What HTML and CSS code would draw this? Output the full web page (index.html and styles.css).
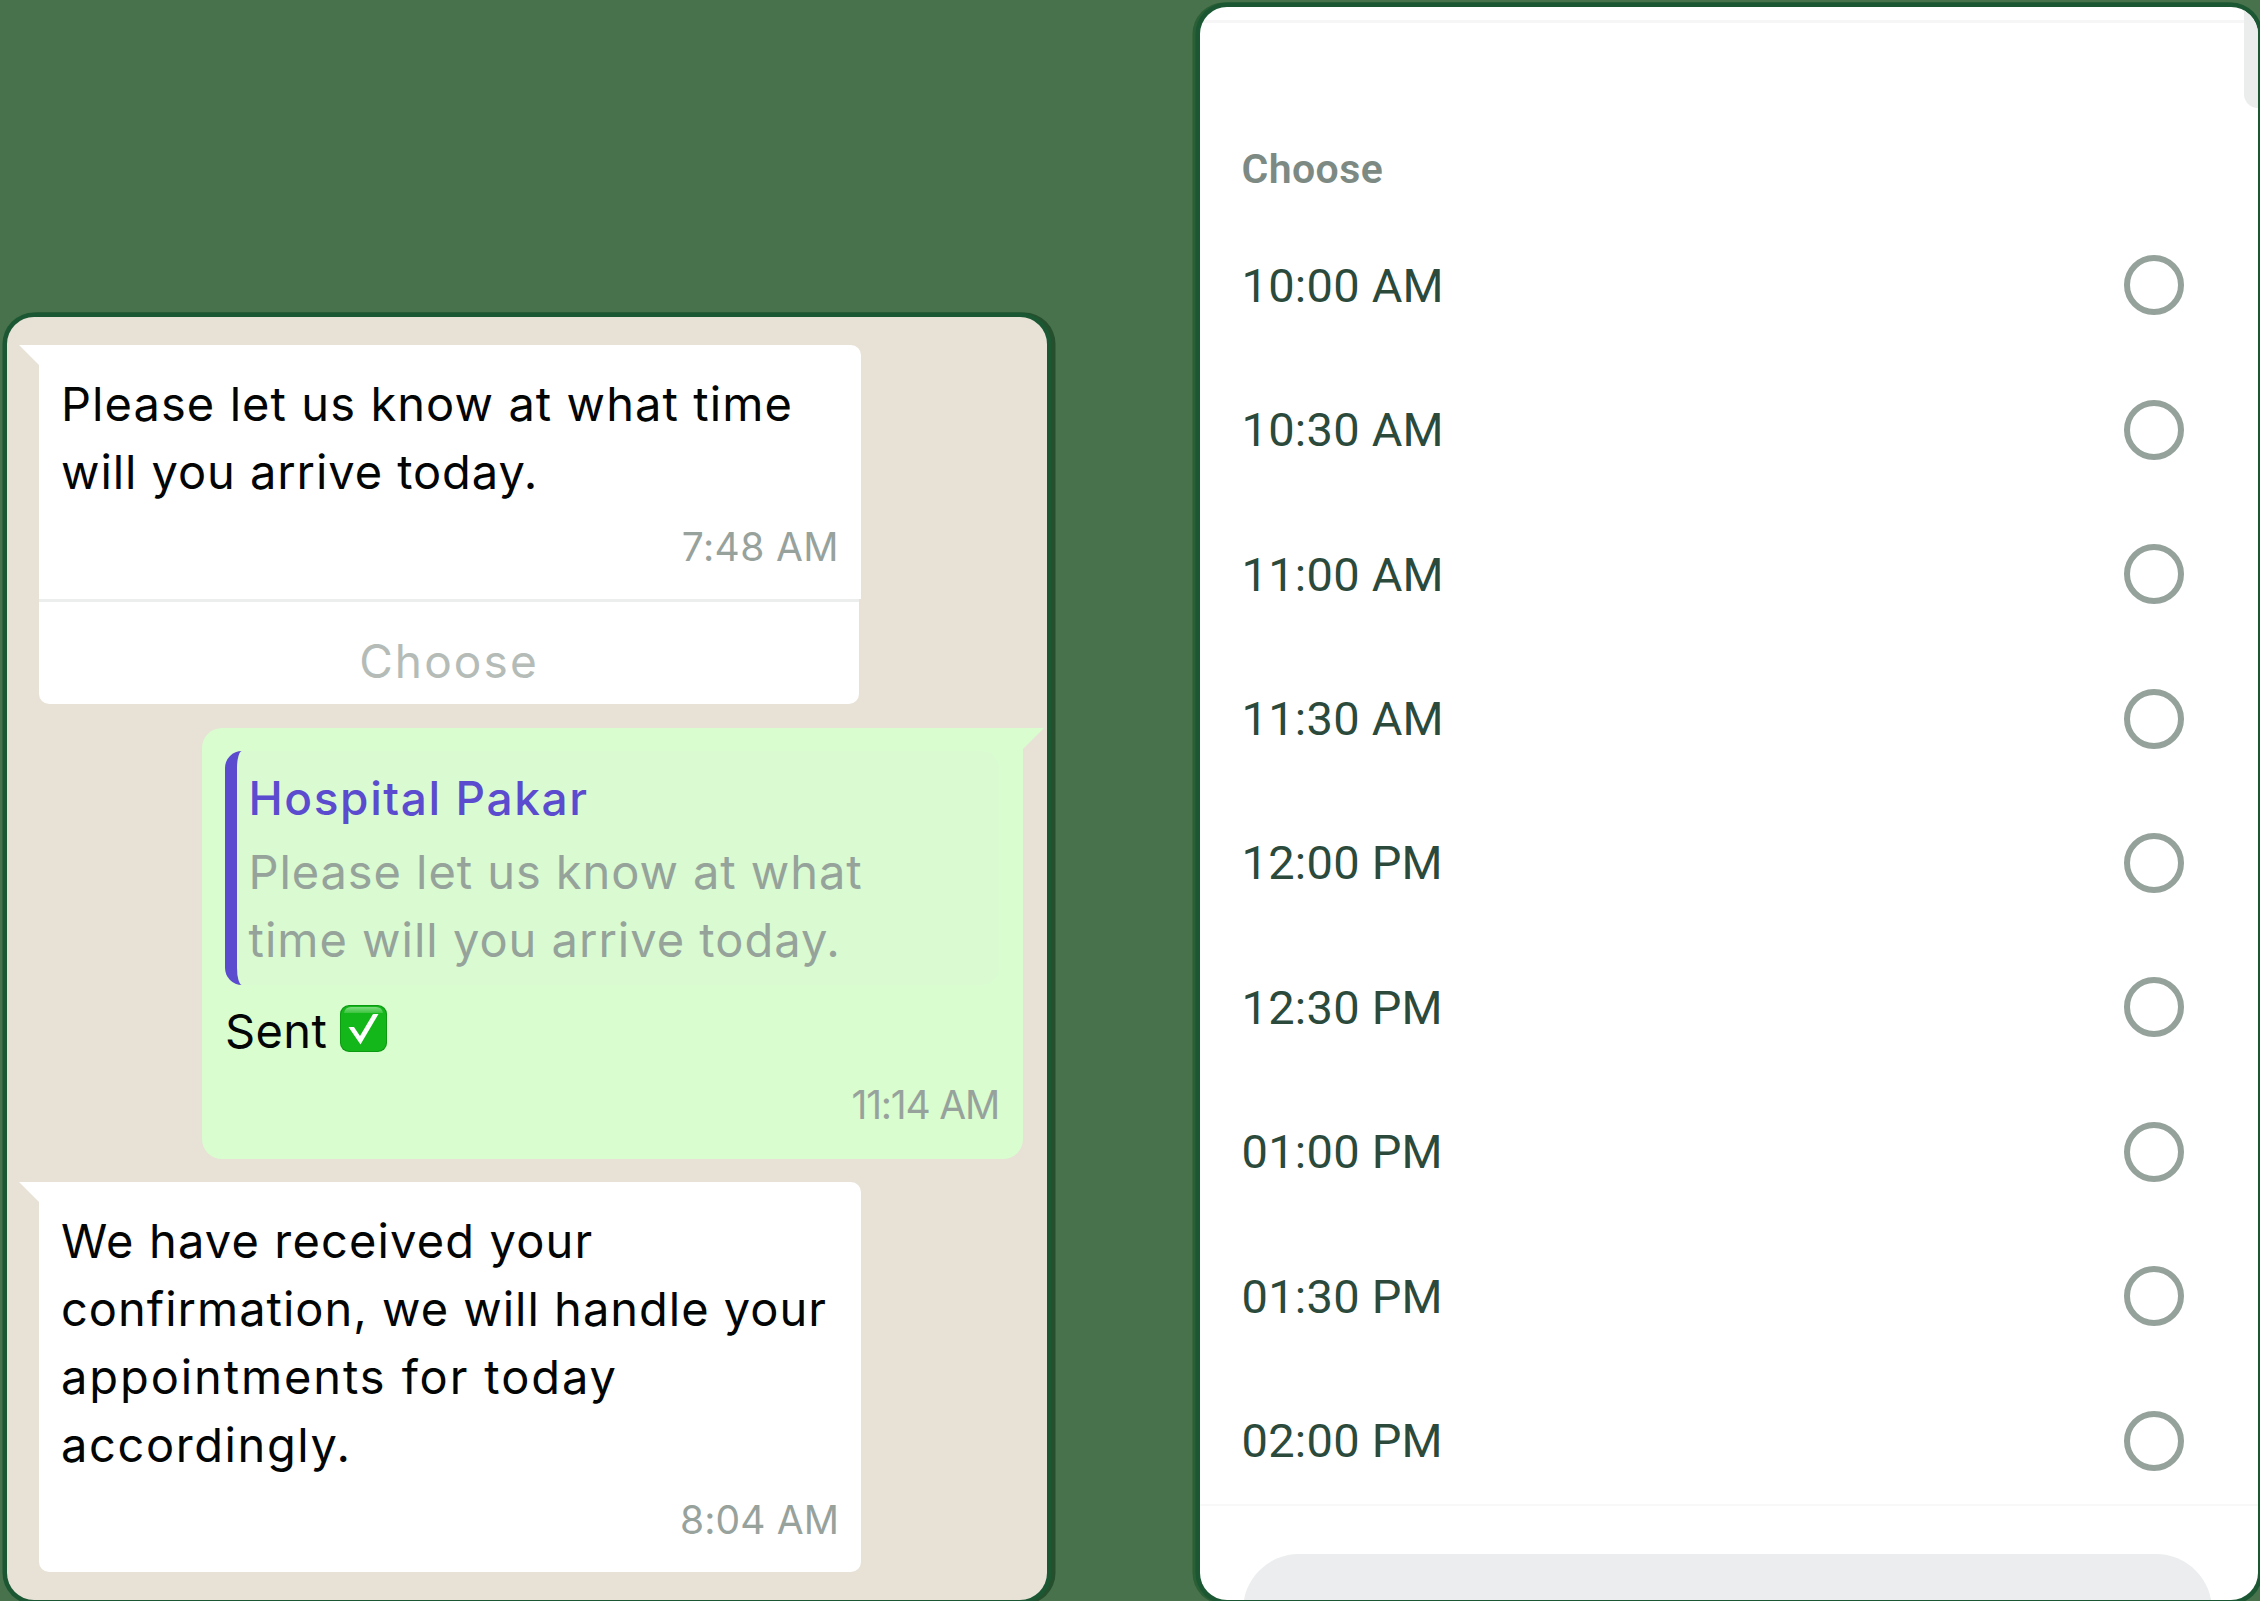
FILE: index.html
```
<!DOCTYPE html>
<html lang="en">
<head>
<meta charset="utf-8">
<title>Appointment time</title>
<link rel="stylesheet" href="styles.css">
</head>
<body>
<main class="stage">
  <section class="chat">
    <article class="bubble incoming has-action">
      <svg class="tail tail-left" viewBox="0 0 21 21"><path d="M0 0H21V21Z"/></svg>
      <div class="body">
        <p class="message">
          <span class="line t-110">Please let us know at what time</span>
          <span class="line t-95">will you arrive today.</span>
        </p>
        <time class="time t-40">7:48 AM</time>
      </div>
      <button class="action" type="button">Choose</button>
    </article>

    <article class="bubble outgoing">
      <svg class="tail tail-right" viewBox="0 0 21 21"><path d="M21 0H0V21Z"/></svg>
      <blockquote class="quote">
        <h2 class="quote-name">Hospital Pakar</h2>
        <p class="quote-text">
          <span class="line t-95">Please let us know at what</span>
          <span class="line t-100">time will you arrive today.</span>
        </p>
      </blockquote>
      <p class="message sent">
        <span class="t-40">Sent</span>
        <svg class="check" viewBox="0 0 47 47">
          <defs>
            <linearGradient id="gloss" x1="0" y1="0" x2="0" y2="1">
              <stop offset="0" stop-color="#7fdc80"/>
              <stop offset="1" stop-color="#3cc43f"/>
            </linearGradient>
          </defs>
          <rect width="47" height="47" rx="9" fill="#0b9a12"/>
          <rect x="1" y="1" width="45" height="45" rx="8.500" fill="#13b719"/>
          <path d="M4 8Q5 2 11 2H36Q42 2 43 8Z" fill="url(#gloss)"/>
          <path d="M8.500 22H14L20 31L33 9H38.500L20.500 39.500Z" fill="#fff"/>
        </svg>
      </p>
      <time class="time t-neg">11:14 AM</time>
    </article>

    <article class="bubble incoming">
      <svg class="tail tail-left" viewBox="0 0 21 21"><path d="M0 0H21V21Z"/></svg>
      <div class="body last">
        <p class="message">
          <span class="line t-115">We have received your</span>
          <span class="line t-100">confirmation, we will handle your</span>
          <span class="line t-190">appointments for today</span>
          <span class="line t-160">accordingly.</span>
        </p>
        <time class="time t-10">8:04 AM</time>
      </div>
    </article>
  </section>

  <section class="picker">
    <div class="scroll-thumb"></div>
    <h1 class="picker-title">Choose</h1>
    <ul class="options">
      <li class="option">10:00 AM<span class="radio"></span></li>
      <li class="option">10:30 AM<span class="radio"></span></li>
      <li class="option">11:00 AM<span class="radio"></span></li>
      <li class="option">11:30 AM<span class="radio"></span></li>
      <li class="option">12:00 PM<span class="radio"></span></li>
      <li class="option">12:30 PM<span class="radio"></span></li>
      <li class="option">01:00 PM<span class="radio"></span></li>
      <li class="option">01:30 PM<span class="radio"></span></li>
      <li class="option">02:00 PM<span class="radio"></span></li>
    </ul>
    <footer class="picker-footer">
      <button class="send" type="button">Send</button>
    </footer>
  </section>
</main>
</body>
</html>
```
FILE: styles.css
```
* {
  box-sizing: border-box;
  margin: 0;
  padding: 0;
}

body {
  width: 2260px;
  height: 1601px;
  overflow: hidden;
  background: #48724b;
}

.stage {
  display: flex;
  justify-content: space-between;
  align-items: flex-end;
  height: 1601px;
  padding: 0 2px 1.500px 6.500px;
  overflow: hidden;
}

/* Chat panel */

.chat {
  display: flex;
  flex-direction: column;
  width: 1040.500px;
  height: 1283px;
  padding: 28.500px 24px 0 32.500px;
  border-radius: 27px;
  background: #e7e1d6;
  box-shadow: 0 0 0 4.500px #1b5733, 4px 0 0 4.500px #264f2d;
  font-family: Inter, sans-serif;
  font-size: 47px;
  line-height: 68px;
  color: #030504;
}

.bubble {
  position: relative;
}

.incoming {
  width: 822px;
}

.body {
  height: 254px;
  padding: 25px 22px 0 22px;
  border-radius: 0 10px 0 0;
  background: #fefffe;
}

.body.last {
  height: 390px;
  border-radius: 0 10px 10px 10px;
}

.line {
  display: block;
  white-space: nowrap;
}

.time {
  display: block;
  margin-top: 10.500px;
  font-size: 39px;
  line-height: 60px;
  text-align: right;
  color: #98a29d;
}

.action {
  display: block;
  width: 820px;
  height: 105px;
  padding-top: 15px;
  border: 0;
  border-top: 3px solid #ebeeed;
  border-radius: 0 0 10px 10px;
  background: #fefffe;
  font: 400 46px/68px Inter, sans-serif;
  letter-spacing: 2.100px;
  color: #b5bcb8;
}

.tail {
  position: absolute;
  top: 0;
  width: 21px;
  height: 21px;
}

.tail-left {
  left: -20.500px;
  fill: #fefffe;
}

.tail-right {
  right: -20.500px;
  fill: #d9fdcf;
}

.outgoing {
  align-self: flex-end;
  width: 821px;
  height: 431px;
  margin: 23.500px 0;
  padding: 23px 24px 0 23px;
  border-radius: 20px 0 20px 20px;
  background: #d9fdcf;
}

.quote {
  height: 234px;
  padding: 13px 0 0 11.500px;
  border-left: 12px solid #5b4bcf;
  border-radius: 17px;
  background: #dafad2;
}

.quote-name {
  font-size: 46px;
  font-weight: 500;
  letter-spacing: 1.600px;
  color: #5b4bcf;
}

.quote-text {
  margin-top: 6px;
  color: #95a39b;
}

.sent {
  display: flex;
  align-items: center;
  gap: 13px;
  margin-top: 12px;
}

.check {
  width: 47px;
  height: 47px;
  margin-bottom: 5px;
}

.t-neg { letter-spacing: -1.200px; }
.t-10 { letter-spacing: 0.100px; }
.t-40 { letter-spacing: 0.400px; }
.t-95 { letter-spacing: 0.930px; }
.t-100 { letter-spacing: 1px; }
.t-110 { letter-spacing: 1.080px; }
.t-115 { letter-spacing: 1.150px; }
.t-160 { letter-spacing: 1.600px; }
.t-190 { letter-spacing: 1.900px; }

/* Time picker */

.picker {
  position: relative;
  width: 1058.500px;
  height: 1592.500px;
  padding-top: 132px;
  border-radius: 27px;
  background: linear-gradient(#f5f6f5, #f5f6f5) 0 13px / 100% 3px no-repeat #fefffe;
  box-shadow: 0 0 0 4.500px #1b5733, -3px 0 0 4.500px #2b5f35;
  font-family: Roboto, sans-serif;
  overflow: hidden;
}

.scroll-thumb {
  position: absolute;
  top: 0;
  right: 0;
  width: 14px;
  height: 101px;
  border-radius: 0 0 0 14px;
  background: #ebeded;
}

.picker-title {
  padding-left: 42px;
  font-size: 41px;
  font-weight: 600;
  line-height: 60px;
  letter-spacing: 0.400px;
  color: #7d8a84;
}

.options {
  padding-top: 14px;
  list-style: none;
}

.option {
  display: flex;
  justify-content: space-between;
  align-items: center;
  height: 144.440px;
  padding: 0 74.500px 0 42px;
  font-size: 47px;
  letter-spacing: 0.250px;
  color: #2b4a3b;
}

.radio {
  width: 60px;
  height: 60px;
  border: 6px solid #95a19b;
  border-radius: 50%;
}

.picker-footer {
  height: 120px;
  margin-top: -9px;
  padding: 48px 46px 0 43px;
  border-top: 2px solid #f7f8f7;
}

.send {
  display: block;
  width: 100%;
  height: 112px;
  padding: 8px 50px 0 0;
  border: 0;
  border-radius: 56px;
  background: #ebedee;
  font: 500 41px/112px Roboto, sans-serif;
  color: #cdd3c6;
}
```
